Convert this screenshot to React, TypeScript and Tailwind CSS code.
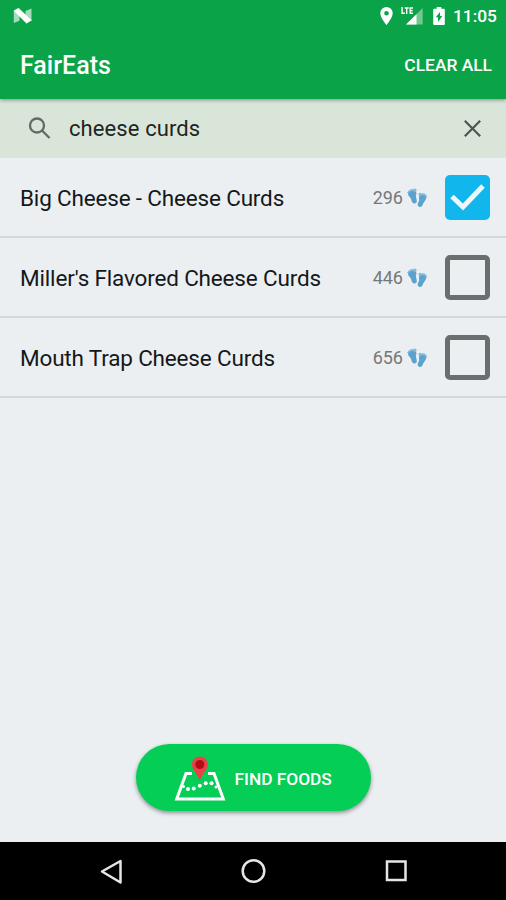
import React from "react";

type Item = { name: string; steps: number; checked: boolean };

const items: Item[] = [
  { name: "Big Cheese - Cheese Curds", steps: 296, checked: true },
  { name: "Miller's Flavored Cheese Curds", steps: 446, checked: false },
  { name: "Mouth Trap Cheese Curds", steps: 656, checked: false },
];

function NougatIcon() {
  return (
    <svg className="h-4 w-[19px]" viewBox="0 0 19 16">
      <path d="M.8 2.500V15l5.700-2.200V4zM18.500.5v12.800L12.500 11V3z" fill="#a5dcb9" />
      <path d="M1 2.800 5.500.2 18.300 12.200l-4.700 3z" fill="#fff" stroke="#fff" strokeWidth=".6" strokeLinejoin="round" />
    </svg>
  );
}

function StatusBar() {
  return (
    <div className="flex h-8 shrink-0 items-center pl-[13px] pr-[10px] text-white">
      <NougatIcon />
      <svg className="ml-auto h-[18px] w-[13px]" viewBox="0 0 13 18">
        <path fillRule="evenodd" fill="#fff" d="M6.500 0A6.200 6.200 0 0 0 .3 6.300C.3 11 6.500 18 6.500 18s6.200-7 6.200-11.700A6.200 6.200 0 0 0 6.500 0Zm0 4a2.300 2.300 0 1 1 0 4.600 2.300 2.300 0 0 1 0-4.600Z" />
      </svg>
      <svg className="ml-[8px] h-[18px] w-[22px]" viewBox="0 0 22 18">
        <path d="M21.700 1v16.500H5z" fill="#70c98f" />
        <path d="M15.500 7.200v10.300H5z" fill="#fff" />
        <path d="M1.100 0v6.200h2.800M3.700 1h4M5.700 1v6M12 1H9.200v5.200H12M9.200 3.600h2.500" fill="none" stroke="#fff" strokeWidth="1.400" />
      </svg>
      <svg className="ml-[10px] h-[18px] w-[12px]" viewBox="0 0 12 18">
        <path d="M3.700 0h4.600v1.800h2.500q1 0 1 1v14.200q0 1-1 1H1.200q-1 0-1-1V2.800q0-1 1-1h2.500z" fill="#fff" />
        <path d="M7 5v4h2.300L5 15v-4.700H2.700z" fill="#0ba348" />
      </svg>
      <span className="ml-[8px] w-[43px] whitespace-nowrap pt-px text-[17.300px] font-medium leading-none">11:05</span>
    </div>
  );
}

function Footprints() {
  return (
    <svg className="h-[20px] w-[20px]" viewBox="0 0 20 20">
      <path d="M1.200 4.800C2 3 4.500 2.200 7 2.800c2.200.6 2.900 2.200 2.200 4.200-.5 1.500-.2 2.600.3 4 .8 2.200.2 4.300-1.600 4.500-2 .2-3.200-1.400-3.500-3.500C4 9.500.2 7.800 1.200 4.800Z" fill="#5ba3cc" />
      <path d="M19 8.600c-.7-1.800-3.400-2.500-5.400-1.500-1.900.9-1.900 2.700-1.400 4.200.3 1.100-.2 1.800-.8 2.700-1.100 1.600-1.100 3.900.5 4.700 1.800.8 3.300-.3 3.900-2.200.7-2.300 4.200-4.800 3.200-7.900Z" fill="#5ba3cc" />
      <g fill="#7cb8da">
        <ellipse cx="8" cy="2.200" rx="1.500" ry="1.800" />
        <circle cx="5.400" cy="2" r="1.200" />
        <circle cx="3.500" cy="2.500" r="1" />
        <circle cx="2" cy="3.400" r=".9" />
        <circle cx="1" cy="4.700" r=".8" />
        <ellipse cx="13" cy="6.500" rx="1.500" ry="1.700" />
        <circle cx="15.600" cy="6.100" r="1.200" />
        <circle cx="17.500" cy="6.600" r="1" />
        <circle cx="18.800" cy="7.600" r=".9" />
        <circle cx="19.200" cy="9" r=".8" />
      </g>
    </svg>
  );
}

function CheckBox({ checked }: { checked: boolean }) {
  if (!checked) return <span className="size-[45px] rounded-[5px] border-[5px] border-[#6a6e6f]" />;
  return (
    <span className="size-[45px] rounded-[5px] bg-[#10b6ec]">
      <svg className="size-full" viewBox="0 0 45 45">
        <path d="m7 21.500 11 10.500L38 11" fill="none" stroke="#f0f5f8" strokeWidth="5" />
      </svg>
    </span>
  );
}

function MapIcon() {
  return (
    <svg className="h-[46px] w-[52px]" viewBox="0 0 52 46">
      <path d="M18 17.500h-6L2.700 43h46.600L40 17.500h-6" fill="none" stroke="#fff" strokeWidth="3" />
      <g fill="#fff">
        <circle cx="9.500" cy="30.500" r="1.500" />
        <circle cx="14" cy="33" r="2" />
        <circle cx="19.700" cy="32.500" r="2" />
        <circle cx="25.800" cy="29.700" r="2" />
        <circle cx="31.700" cy="27.300" r="2" />
        <circle cx="37.500" cy="27.300" r="2" />
        <circle cx="42" cy="31" r="1.500" />
      </g>
      <path d="M25.800.5A7.900 7.900 0 0 0 17.900 8.400c0 5 4.900 8 7.900 16.600 3-8.600 7.900-11.600 7.900-16.600A7.900 7.900 0 0 0 25.800.5Z" fill="#ed3f49" />
      <circle cx="25.800" cy="8.500" r="4.500" fill="#b10d16" />
    </svg>
  );
}

export default function App() {
  return (
    <div className="flex h-[900px] w-[506px] flex-col overflow-hidden bg-[#ebeff2] font-['Roboto',sans-serif]">
      <header className="relative z-10 h-[99px] shrink-0 bg-[#0ba348] text-white shadow-[0_1px_4px_rgba(0,0,0,0.4)]">
        <StatusBar />
        <div className="flex h-[67px] items-center justify-between pl-5 pr-[14px]">
          <h1 className="text-[25px] font-medium">FairEats</h1>
          <button className="text-[17.400px] font-medium">CLEAR ALL</button>
        </div>
      </header>
      <div className="flex h-[59px] shrink-0 items-center bg-[#dae5da] pl-[28px] pr-[25px]">
        <svg className="size-[23px]" viewBox="0 0 23 23" fill="none" stroke="#626a64" strokeWidth="2.300">
          <circle cx="9" cy="8.500" r="7" />
          <path d="m14 13.500 7.500 7.500" />
        </svg>
        <span className="ml-[18px] text-[22px] tracking-[0.100px] text-[#202522]">cheese curds</span>
        <svg className="ml-auto size-[17px]" viewBox="0 0 17 17" stroke="#4d554f" strokeWidth="2.200">
          <path d="m.8.800 15.400 15.400M16.200.800.800 16.200" />
        </svg>
      </div>
      <ul>
        {items.map((item) => (
          <li key={item.name} className="flex h-20 items-center border-b-2 border-[#d4d8da] pl-5 pr-4">
            <span className="pt-[3px] text-[22.500px] tracking-[-0.170px] text-[#15181a]">{item.name}</span>
            <span className="ml-auto pt-px text-[18px] text-[#74787a]">{item.steps}</span>
            <span className="ml-[4px] mr-[18px] pt-[2px]"><Footprints /></span>
            <CheckBox checked={item.checked} />
          </li>
        ))}
      </ul>
      <div className="mt-auto flex h-[98px] justify-center">
        <button className="flex h-[67px] w-[235px] items-center rounded-full bg-[#04ce56] pl-[38px] text-white shadow-[0_2px_4px_rgba(0,0,0,0.4)]">
          <span className="pt-[3px]"><MapIcon /></span>
          <span className="ml-[9px] whitespace-nowrap pt-[4px] text-[17.300px] font-medium">FIND FOODS</span>
        </button>
      </div>
      <nav className="h-[58px] shrink-0 bg-black">
        <svg className="h-full w-full" viewBox="0 0 506 58" fill="none" stroke="#e6e6e6" strokeWidth="2.500">
          <path d="M120.500 19v21.500L102 29.500z" strokeLinejoin="round" />
          <circle cx="253.500" cy="29" r="10.800" />
          <rect x="387" y="19.500" width="18.500" height="18.500" />
        </svg>
      </nav>
    </div>
  );
}
